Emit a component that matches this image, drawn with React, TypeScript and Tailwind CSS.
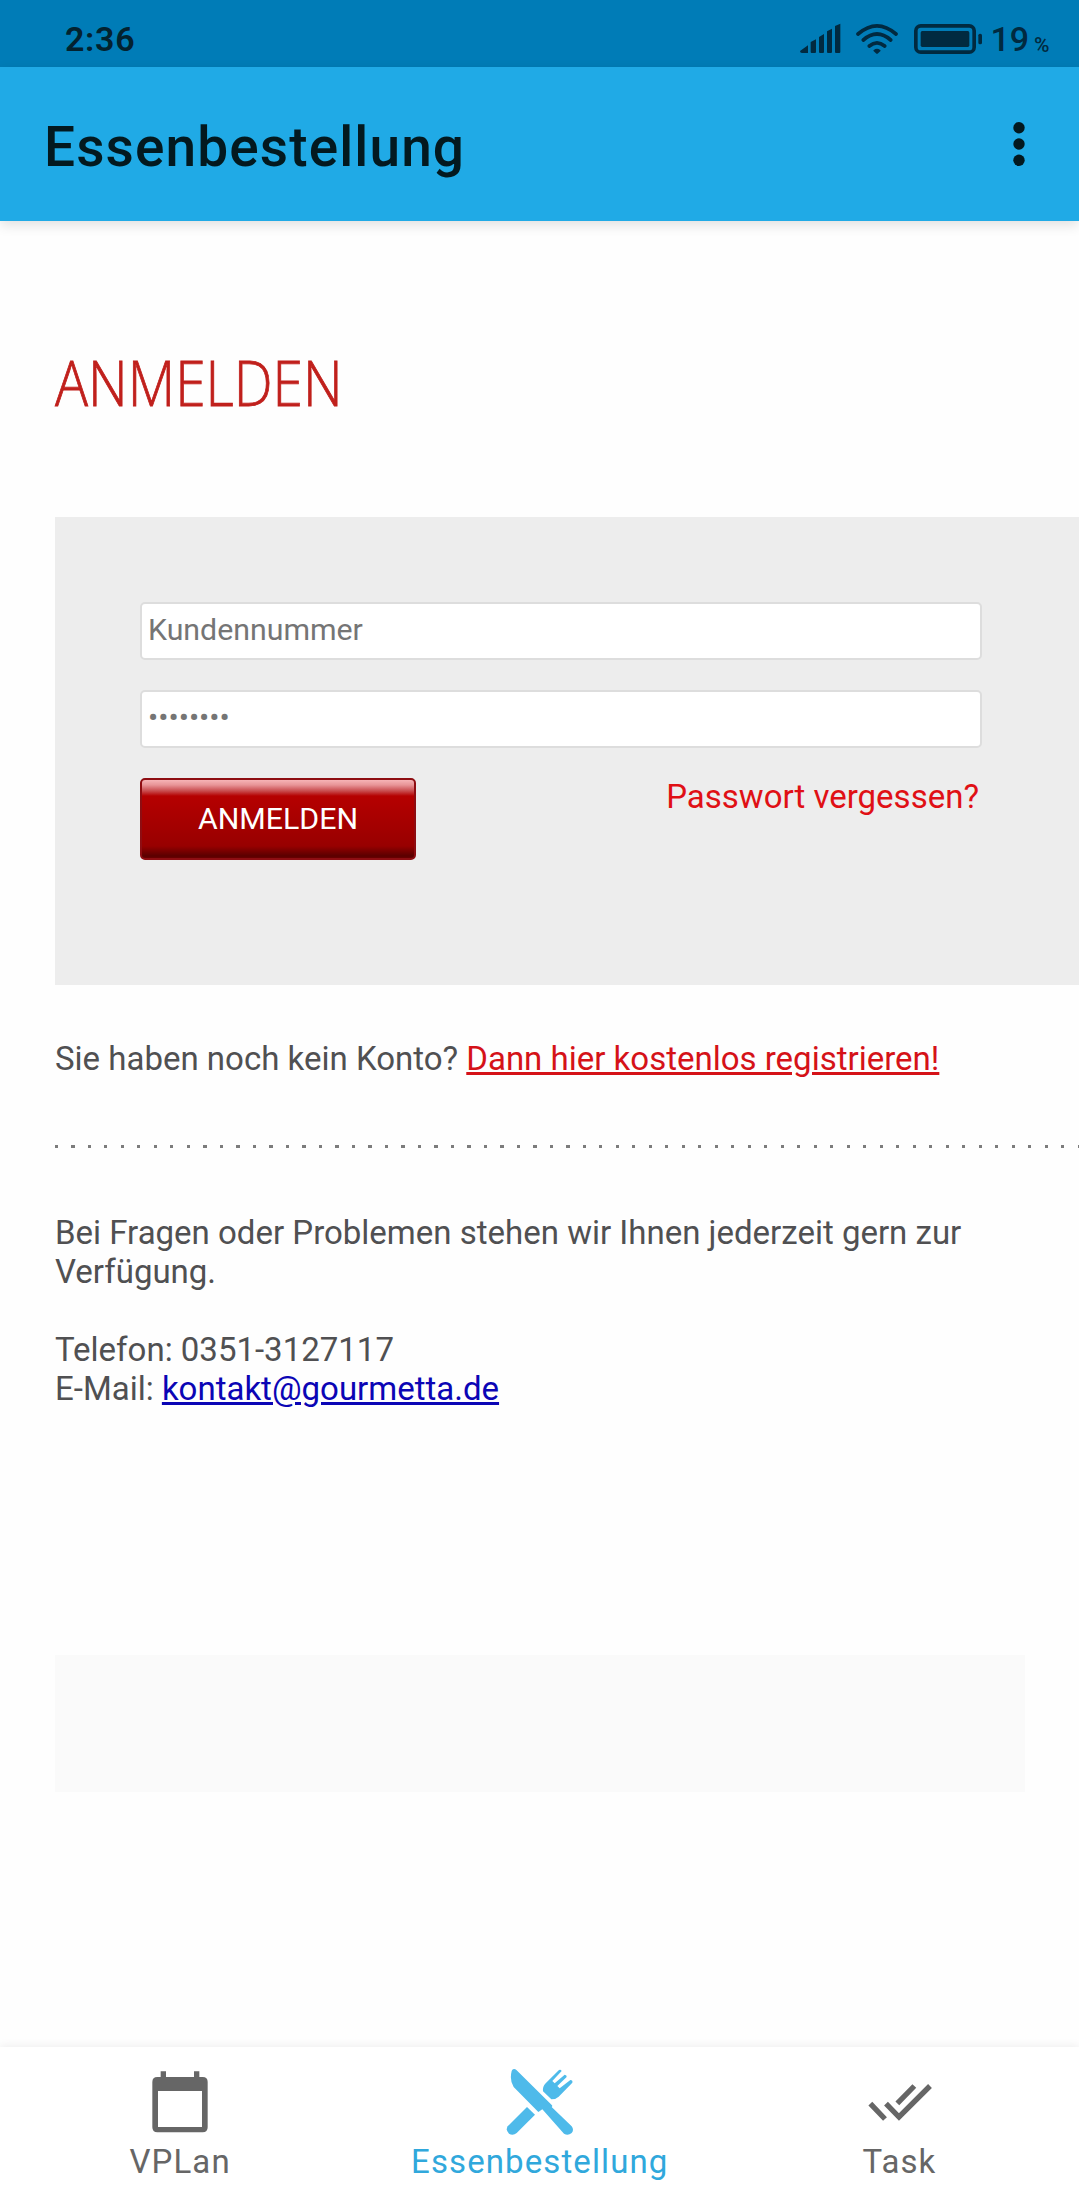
import React from "react";

function StatusBar() {
  return (
    <div className="flex h-[67px] items-start bg-[#007cb7] text-[#012a40]">
      <div className="pl-[65px] pt-[19px] text-[34px] font-semibold leading-[40px] tracking-[0.7px] text-[#03222f]">2:36</div>
      <div className="ml-auto flex items-start pr-[29.5px]">
        <svg className="mt-[23px] h-[31px] w-[41px]" viewBox="60 69 123 93" fill="currentColor">
          <path d="M60 153L84 136V159H66Q60 159 60 153ZM92 126L108 118V156Q108 159 105 159H95Q92 159 92 156ZM117 111L132 102V156Q132 159 129 159H120Q117 159 117 156ZM141 94L156 86V156Q156 159 153 159H144Q141 159 141 156ZM165 78L181 71V156Q181 159 178 159H168Q165 159 165 156Z" />
        </svg>
        <svg className="ml-[15px] mt-[23px] h-[31px] w-[42px]" viewBox="228 69 126 93" fill="none" stroke="currentColor" strokeLinecap="round" strokeWidth="11">
          <path d="M234 102Q291 53 348 102M250 120Q291 84 332 120M268 138Q291 119 314 138" />
          <path d="M283 152Q291 146 299 152L291 159Z" fill="currentColor" strokeWidth="5" strokeLinejoin="round" />
        </svg>
        <svg className="ml-[16px] mt-[23px] h-[32px] w-[68px]" viewBox="402 69 204 96" fill="currentColor">
          <rect x="407.5" y="77.500" width="175" height="79" rx="15" fill="none" stroke="currentColor" strokeWidth="11" />
          <rect x="422" y="93" width="146" height="48" rx="5" />
          <rect x="595" y="101" width="11" height="32" rx="5" />
        </svg>
        <div className="ml-[8.5px] pt-[19px] text-[34px] font-medium leading-[40px]">19</div>
        <div className="ml-[5px] pt-[34px] text-[21px] font-medium leading-[23px]">%</div>
      </div>
    </div>
  );
}

function AppBar() {
  return (
    <header className="relative flex h-[154px] items-center justify-between bg-[#20aae6] pl-[44px] pr-[54px] text-[#03191f] shadow-[0_4px_12px_rgba(0,0,0,0.12)]">
      <h1 className="pt-[6px] text-[55px] font-medium leading-[64px] tracking-[1.1px]">Essenbestellung</h1>
      <svg className="mb-[1px] h-[44px] w-[12px]" viewBox="0 0 12 44" fill="currentColor">
        <circle cx="6" cy="5.700" r="5.700" />
        <circle cx="6" cy="22" r="5.700" />
        <circle cx="6" cy="38.300" r="5.700" />
      </svg>
    </header>
  );
}

const inputClass =
  "block h-[58px] w-[842px] rounded-[5px] border-2 border-[#dddddd] bg-white pl-[6px] pb-[3px] text-[30.3px] placeholder:text-[#757575] placeholder:opacity-100 outline-none";

function LoginForm() {
  return (
    <form className="ml-[55px] h-[468px] bg-[#ededed] pl-[85px] pt-[85px]">
      <input className={inputClass} placeholder="Kundennummer" />
      <input className={inputClass + " mt-[30px]"} type="password" placeholder="••••••••" />
      <div className="mt-[30px] flex w-[842px] items-start justify-between pr-[3px]">
        <button
          type="button"
          className="h-[82px] w-[276px] rounded-[5px] border-2 border-[#8e0d12] bg-[linear-gradient(to_bottom,#f6b4b6_0px,#e89497_5px,#c84a4c_11px,#b50000_16px,#b00000_25px,#980000_66px,#5a0000_76px,#6a0000_78px)] pb-[1px] text-[30.3px] text-white"
        >
          ANMELDEN
        </button>
        <a className="-mt-px text-[33px] leading-[39px] text-[#e01015]">Passwort vergessen?</a>
      </div>
    </form>
  );
}

function CalendarIcon() {
  return (
    <svg className="size-[66px]" viewBox="201 114 198 198" fill="#666666">
      <path fillRule="evenodd" d="M242 124H258V141H342V124H358V141H368Q383 141 383 156V292Q383 307 368 307H232Q217 307 217 292V156Q217 141 232 141H242ZM234 183V291H366V183Z" />
    </svg>
  );
}

function CutleryIcon() {
  return (
    <svg className="size-[68px]" viewBox="348 114 204 204" fill="#4ebaea">
      <path d="M367 119Q373 114 380 121L486 226Q488 229 485 231L545 289Q553 299 545 309Q534 318 522 311L457 238L445 246L371 171Q358 151 365 123Z" />
      <path d="M411 231L435 254L380 309Q369 318 357 311Q346 301 353 289Z" />
      <path d="M459 184Q457 170 467 160L507 120Q512 117 515 123L487 153L494 160L524 134Q531 135 530 141L502 168L509 175L541 150Q549 151 547 158L506 200Q498 208 484 208Z" />
    </svg>
  );
}

function TaskIcon() {
  return (
    <svg className="size-[66px]" viewBox="258 114 198 198" fill="none" stroke="#666666" strokeWidth="16">
      <path d="M271 221L315 267M318 221L357 261L450 168M403 168L352 220" />
    </svg>
  );
}

function NavItem({ label, active, children }: { label: string; active?: boolean; children: React.ReactNode }) {
  return (
    <div className="flex flex-1 flex-col items-center pt-[21px]">
      <div className="flex h-[66px] items-start">{children}</div>
      <span className={"mt-[8px] pl-[0.5px] text-[33px] leading-[39px] tracking-[1.1px] " + (active ? "text-[#30a8dc]" : "text-[#666666]")}>{label}</span>
    </div>
  );
}

export default function App() {
  return (
    <div className="flex h-[2196px] w-[1079px] flex-col overflow-hidden bg-[#fefefe] font-[Roboto,sans-serif] text-[#505052]">
      <StatusBar />
      <AppBar />
      <main className="flex-1">
        <div className="h-[296px] pl-[55px] pt-[118px]">
          <h2 className="inline-block origin-left scale-x-[0.873] font-['Open_Sans',sans-serif] text-[63px] font-light leading-[86px] text-[#c0201c] [-webkit-text-stroke:0.8px_#c0201c]">ANMELDEN</h2>
        </div>
        <LoginForm />
        <p className="pl-[55px] pt-[54px] text-[33px] leading-[39px]">
          Sie haben noch kein Konto? <a className="text-[#d51218] underline">Dann hier kostenlos registrieren!</a>
        </p>
        <div className="ml-[55px] mt-[67px] h-[3px] bg-[repeating-linear-gradient(to_right,#7c7c7c_0px,#7c7c7c_3px,transparent_3px,transparent_16.5px)]" />
        <p className="pl-[55px] pr-[100px] pt-[65px] text-[33px] leading-[39px]">
          Bei Fragen oder Problemen stehen wir Ihnen jederzeit gern zur
          <br />
          Verfügung.
          <br />
          <br />
          Telefon: 0351-3127117
          <br />
          E-Mail: <a className="text-[#0b05b5] underline">kontakt@gourmetta.de</a>
        </p>
        <div className="ml-[55px] mt-[247px] h-[137px] w-[970px] bg-[#fafafa]" />
      </main>
      <nav className="flex h-[149px] bg-white shadow-[0_-2px_8px_rgba(0,0,0,0.06)]">
        <NavItem label="VPLan"><CalendarIcon /></NavItem>
        <NavItem label="Essenbestellung" active><CutleryIcon /></NavItem>
        <NavItem label="Task"><TaskIcon /></NavItem>
      </nav>
    </div>
  );
}
